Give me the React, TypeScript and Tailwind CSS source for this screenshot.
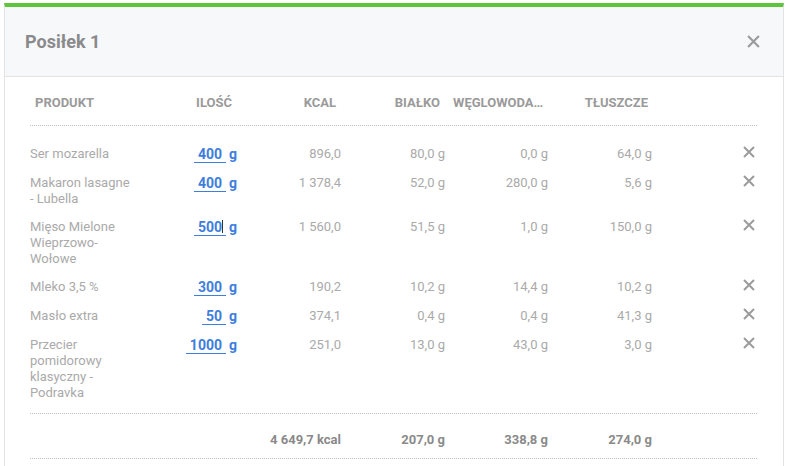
import React from "react";

type Row = {
  name: string;
  qty: string;
  kcal: string;
  protein: string;
  carbs: string;
  fat: string;
  focused?: boolean;
};

const rows: Row[] = [
  { name: "Ser mozarella", qty: "400", kcal: "896,0", protein: "80,0 g", carbs: "0,0 g", fat: "64,0 g" },
  { name: "Makaron lasagne - Lubella", qty: "400", kcal: "1 378,4", protein: "52,0 g", carbs: "280,0 g", fat: "5,6 g" },
  { name: "Mięso Mielone Wieprzowo-Wołowe", qty: "500", kcal: "1 560,0", protein: "51,5 g", carbs: "1,0 g", fat: "150,0 g", focused: true },
  { name: "Mleko 3,5 %", qty: "300", kcal: "190,2", protein: "10,2 g", carbs: "14,4 g", fat: "10,2 g" },
  { name: "Masło extra", qty: "50", kcal: "374,1", protein: "0,4 g", carbs: "0,4 g", fat: "41,3 g" },
  { name: "Przecier pomidorowy klasyczny - Podravka", qty: "1000", kcal: "251,0", protein: "13,0 g", carbs: "43,0 g", fat: "3,0 g" },
];

const cols = "grid grid-cols-[107px_100px_104px_104px_103px_104px_1fr]";

function Cross({ size = 12 }: { size?: number }) {
  return (
    <svg width={size} height={size} viewBox="0 0 12 12" className="block">
      <path d="M1 1 L11 11 M11 1 L1 11" stroke="#9b9b9b" strokeWidth="2" strokeLinecap="butt" />
    </svg>
  );
}

export default function App() {
  return (
    <div className="w-[789px] h-[466px] bg-white overflow-hidden pl-[4px] pt-[3px]" style={{ fontFamily: "Roboto, 'Liberation Sans', sans-serif" }}>
      <div className="w-[780px] h-[470px] border-x border-[#e3e3e3] border-t-4 border-t-[#5ec43c]">
        {/* modal header */}
        <div className="h-[70px] bg-[#f7f8fa] border-b border-[#e4e4e4] flex items-center justify-between pl-[20px] pr-[23px]">
          <h2 className="text-[18px] font-bold text-[#8a8a8a] leading-none">Posiłek 1</h2>
          <Cross size={13} />
        </div>

        <div className="pl-[25px] pr-[26px]">
          {/* table head */}
          <div className={`${cols} h-[49px] pt-[3px] items-center border-b border-dotted border-[#bdbdbd] text-[13px] font-bold text-[#9a9a9a] leading-4 uppercase`}>
            <div className="px-[5px]">Produkt</div>
            <div className="px-[5px] text-right">Ilość</div>
            <div className="px-[5px] text-right">Kcal</div>
            <div className="px-[5px] text-right">Białko</div>
            <div className="pl-[8px] pr-[4px] text-right whitespace-nowrap overflow-hidden text-ellipsis">Węglowodany</div>
            <div className="px-[4px] text-right">Tłuszcze</div>
            <div />
          </div>

          {/* rows */}
          <div className="pt-[14px] pb-[6px] border-b border-dotted border-[#bdbdbd] text-[13px] leading-4 text-[#aaaaaa]">
            {rows.map(r => (
              <div key={r.name} className={`${cols} items-start py-[6px]`}>
                <div className="w-[102px]">{r.name}</div>
                <div className="flex justify-end items-start text-[14px] font-bold text-[#3d7ede]">
                  <span className="relative pl-[4px] pr-[4px] border-b border-[#3d7ede] leading-4">
                    {r.qty}
                    {r.focused && <span className="absolute right-[3px] top-[1px] w-px h-[13px] bg-[#333]" />}
                  </span>
                  <span className="ml-[3px] leading-4">g</span>
                </div>
                <div className="text-right whitespace-nowrap">{r.kcal}</div>
                <div className="text-right whitespace-nowrap">{r.protein}</div>
                <div className="text-right whitespace-nowrap">{r.carbs}</div>
                <div className="text-right whitespace-nowrap">{r.fat}</div>
                <div className="flex justify-end pr-[2px]">
                  <Cross />
                </div>
              </div>
            ))}
          </div>

          {/* totals */}
          <div className={`${cols} pt-[18px] pb-[10px] border-b border-dotted border-[#bdbdbd] text-[13px] leading-4 font-bold text-[#8a8a8a]`}>
            <div />
            <div />
            <div className="text-right whitespace-nowrap">4 649,7 kcal</div>
            <div className="text-right whitespace-nowrap">207,0 g</div>
            <div className="text-right whitespace-nowrap">338,8 g</div>
            <div className="text-right whitespace-nowrap">274,0 g</div>
            <div />
          </div>
        </div>
      </div>
    </div>
  );
}
